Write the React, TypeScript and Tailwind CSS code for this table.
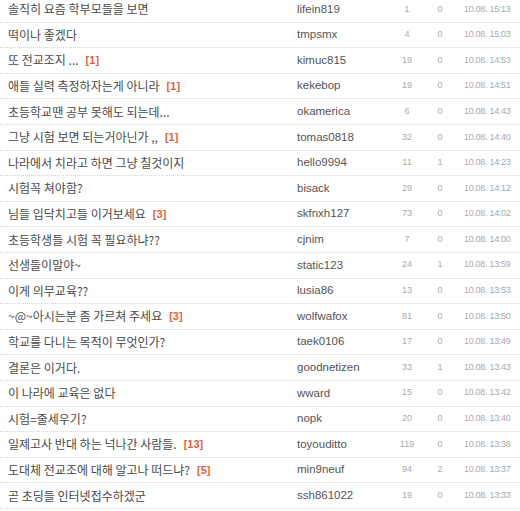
const POSTS = [
  { title: '솔직히 요즘 학부모들을 보면', author: 'lifein819', views: 1, rec: 0, date: '10.08. 15:13' },
  { title: '떡이나 좋겠다', author: 'tmpsmx', views: 4, rec: 0, date: '10.08. 15:03' },
  { title: '또 전교조지 ...', comments: 1, author: 'kimuc815', views: 19, rec: 0, date: '10.08. 14:53' },
  { title: '애들 실력 측정하자는게 아니라', comments: 1, author: 'kekebop', views: 19, rec: 0, date: '10.08. 14:51' },
  { title: '초등학교땐 공부 못해도 되는데...', author: 'okamerica', views: 6, rec: 0, date: '10.08. 14:43' },
  { title: '그냥 시험 보면 되는거아닌가 ,,', comments: 1, author: 'tomas0818', views: 32, rec: 0, date: '10.08. 14:40' },
  { title: '나라에서 치라고 하면 그냥 칠것이지', author: 'hello9994', views: 11, rec: 1, date: '10.08. 14:23' },
  { title: '시험꼭 쳐야함?', author: 'bisack', views: 29, rec: 0, date: '10.08. 14:12' },
  { title: '님들 입닥치고들 이거보세요', comments: 3, author: 'skfnxh127', views: 73, rec: 0, date: '10.08. 14:02' },
  { title: '초등학생들 시험 꼭 필요하냐??', author: 'cjnim', views: 7, rec: 0, date: '10.08. 14:00' },
  { title: '선생들이말야~', author: 'static123', views: 24, rec: 1, date: '10.08. 13:59' },
  { title: '이게 의무교육??', author: 'lusia86', views: 13, rec: 0, date: '10.08. 13:53' },
  { title: '~@~아시는분 좀 가르쳐 주세요', comments: 3, author: 'wolfwafox', views: 81, rec: 0, date: '10.08. 13:50' },
  { title: '학교를 다니는 목적이 무엇인가?', author: 'taek0106', views: 17, rec: 0, date: '10.08. 13:49' },
  { title: '결론은 이거다.', author: 'goodnetizen', views: 33, rec: 1, date: '10.08. 13:43' },
  { title: '이 나라에 교육은 없다', author: 'wward', views: 15, rec: 0, date: '10.08. 13:42' },
  { title: '시험=줄세우기?', author: 'nopk', views: 20, rec: 0, date: '10.08. 13:40' },
  { title: '일제고사 반대 하는 넉나간 사람들.', comments: 13, author: 'toyouditto', views: 119, rec: 0, date: '10.08. 13:38' },
  { title: '도대체 전교조에 대해 알고나 떠드냐?', comments: 5, author: 'min9neuf', views: 94, rec: 2, date: '10.08. 13:37' },
  { title: '곧 초딩들 인터넷접수하겠군', author: 'ssh861022', views: 19, rec: 0, date: '10.08. 13:33' },
]

const KO = "font-['Noto_Sans_CJK_KR',sans-serif]"
const LAT = "font-['Liberation_Sans',Arial,sans-serif]"

export default function App() {
  return (
    <div className="h-[511px] w-[520px] overflow-hidden bg-white">
      <ul className="-mt-[3px]">
        {POSTS.map((p) => (
          <li
            key={p.author + p.date}
            className="grid h-[25.6px] grid-cols-[297px_94px_32px_34px_63px] items-center border-b border-dotted border-[#d4d4d4]"
          >
            <div className={`flex items-center truncate pl-[8px] text-[12px] text-[#4a4a4a] ${KO}`}>
              <span>{p.title}</span>
              {p.comments ? (
                <span className={`ml-[7px] text-[11px] font-bold text-[#e2603c] ${LAT}`}>[{p.comments}]</span>
              ) : null}
            </div>
            <div className={`text-[11.5px] text-[#555] ${LAT}`}>{p.author}</div>
            <div className={`text-center text-[9px] text-[#aaa] ${LAT}`}>{p.views}</div>
            <div className={`text-center text-[9px] text-[#aaa] ${LAT}`}>{p.rec}</div>
            <div className={`whitespace-nowrap pl-[7px] text-[9px] tracking-[-0.3px] text-[#aaa] ${LAT}`}>{p.date}</div>
          </li>
        ))}
      </ul>
    </div>
  )
}
